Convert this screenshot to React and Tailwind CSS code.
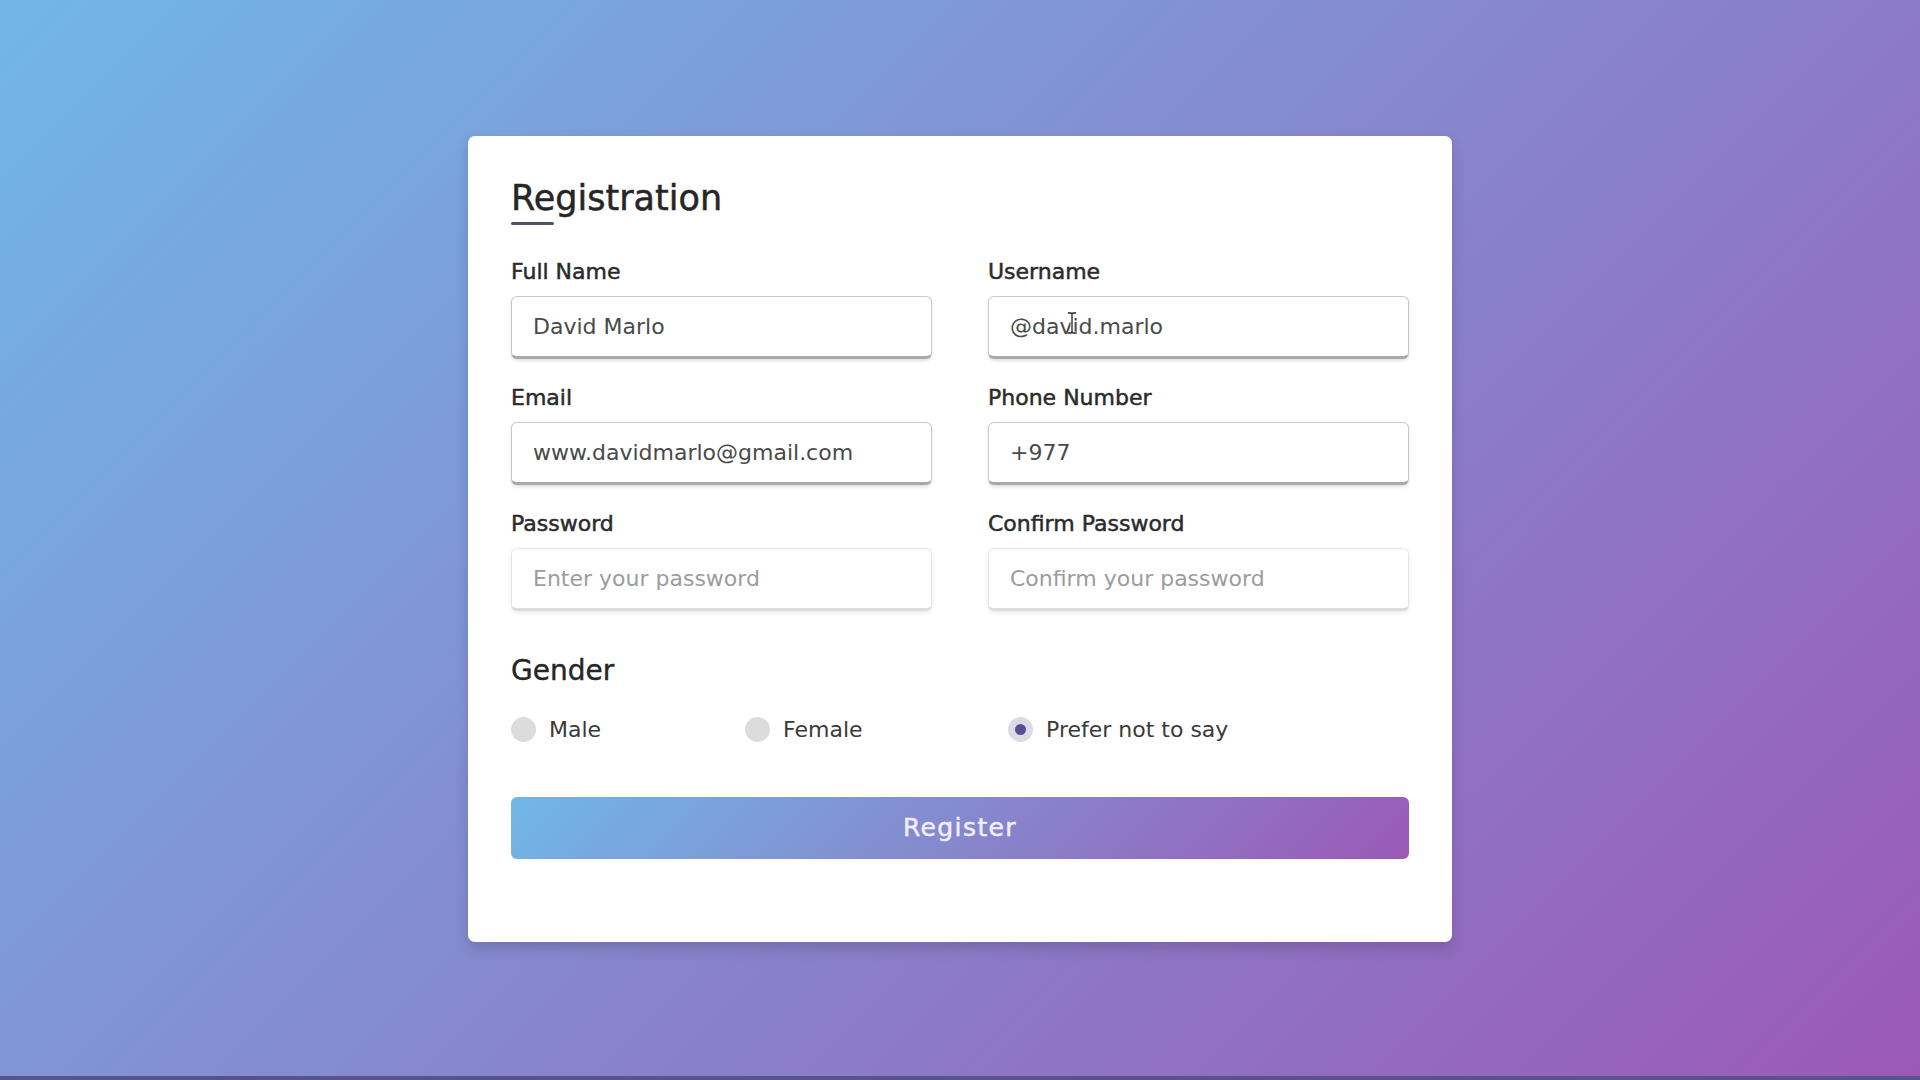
import React from 'react';

const fields = [
  { label: 'Full Name', value: 'David Marlo' },
  { label: 'Username', value: '@david.marlo', cursor: true },
  { label: 'Email', value: 'www.davidmarlo@gmail.com' },
  { label: 'Phone Number', value: '+977' },
  { label: 'Password', placeholder: 'Enter your password' },
  { label: 'Confirm Password', placeholder: 'Confirm your password' },
];

function Field({ label, value, placeholder, cursor }) {
  const filled = value !== undefined;
  return (
    <div>
      <span className="mb-[8px] block h-[32px] text-[22px] leading-[32px] text-[#2b2b2b] [-webkit-text-stroke:0.5px_#2b2b2b]">
        {label}
      </span>
      <div className="relative">
        <input
          type="text"
          readOnly
          value={value ?? ''}
          placeholder={placeholder}
          className={`h-[63px] w-full rounded-[6px] border border-b-[3px] bg-white pt-[1px] pl-[21px] text-[22px] text-[#4a4a4a] outline-none placeholder:text-[#9c9c9c] ${
            filled
              ? 'border-[#c9c9c9] border-b-[#a9a9a9] shadow-[0_2px_3px_rgba(0,0,0,0.12)]'
              : 'border-[#e6e6e6] border-b-[#dcdcdc] shadow-[0_2px_4px_rgba(0,0,0,0.08)]'
          }`}
        />
        {cursor && (
          <svg className="absolute left-[79px] top-[16px]" width="10" height="22" viewBox="0 0 10 22">
            <path d="M1 1h3l1 1 1-1h3M5 2v18M1 21h3l1-1 1 1h3" fill="none" stroke="#fff" strokeWidth="3" />
            <path d="M1 1h3l1 1 1-1h3M5 2v18M1 21h3l1-1 1 1h3" fill="none" stroke="#222" strokeWidth="1.3" />
          </svg>
        )}
      </div>
    </div>
  );
}

function Radio({ label, checked, width }) {
  return (
    <label className={`flex items-center ${width}`}>
      <span
        className={`mr-[13px] h-[25px] w-[25px] rounded-full ${
          checked ? 'border-[7px] border-[#dcdae6] bg-[#574e93]' : 'bg-[#dcdcdc]'
        }`}
      />
      <span className="text-[22px] text-[#3a3a3a]">{label}</span>
    </label>
  );
}

export default function App() {
  return (
    <div className="flex h-screen w-full flex-col bg-[linear-gradient(135deg,#71b7e6,#9b59b6)] font-['DejaVu_Sans',sans-serif]">
      <div className="flex flex-1 items-center justify-center pt-[1px]">
        <div className="w-[984px] rounded-[7px] bg-white px-[43px] pt-[36px] pb-[83px] shadow-[0_7px_14px_rgba(0,0,0,0.15)]">
          <h1 className="relative h-[54px] text-[35px] leading-[52px] text-[#262626] [-webkit-text-stroke:0.5px_#262626]">
            Registration
            <span className="absolute bottom-[1px] left-0 h-[3px] w-[43px] rounded bg-[#4d5465]" />
          </h1>

          <form className="mt-[30px]">
            <div className="grid grid-cols-2 gap-x-[56px] gap-y-[23px]">
              {fields.map((f) => (
                <Field key={f.label} {...f} />
              ))}
            </div>

            <div className="mt-[39px] h-[42px] text-[28px] leading-[42px] text-[#262626] [-webkit-text-stroke:0.4px_#262626]">
              Gender
            </div>
            <div className="mt-[22px] flex h-[32px] items-center">
              <Radio label="Male" width="w-[234px]" />
              <Radio label="Female" width="w-[263px]" />
              <Radio label="Prefer not to say" checked />
            </div>

            <button
              type="button"
              className="mt-[51px] h-[62px] w-full rounded-[6px] bg-[linear-gradient(135deg,#71b7e6,#9b59b6)] pt-[1px] text-[25px] tracking-[1.4px] text-[#f1eefa] [-webkit-text-stroke:0.5px_#f1eefa]"
            >
              Register
            </button>
          </form>
        </div>
      </div>
      <div className="h-[4px] w-full bg-[#58538f]" />
    </div>
  );
}
